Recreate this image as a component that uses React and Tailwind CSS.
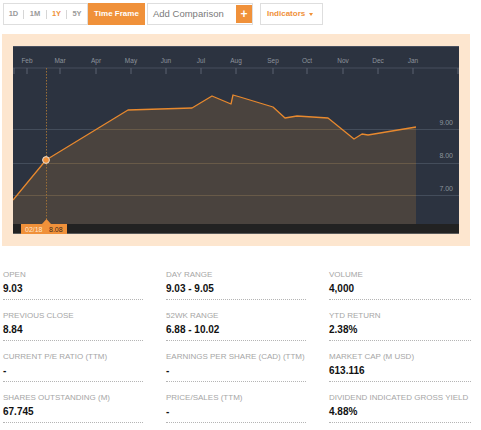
import React from 'react';

const months = [
  ['Feb', 14], ['Mar', 47], ['Apr', 83], ['May', 118], ['Jun', 153], ['Jul', 188],
  ['Aug', 223], ['Sep', 260], ['Oct', 294], ['Nov', 330], ['Dec', 365], ['Jan', 400],
];
const ticks = [1, 14, 47, 83, 118, 153, 188, 223, 260, 294, 330, 365, 400, 445];

const pts = [
  [0, 154], [33, 114], [115, 64], [179, 62], [199, 50], [218, 58], [220, 49], [227, 51],
  [260, 61], [272, 72], [284, 70], [315, 72], [341, 93], [349, 88], [355, 89], [403, 81],
];
const line = pts.map((p) => p.join(',')).join(' ');
const area = `0,178 ${line} 403,178`;

const grid = [83, 117, 149];

const stats = [
  ['OPEN', '9.03'], ['DAY RANGE', '9.03 - 9.05'], ['VOLUME', '4,000'],
  ['PREVIOUS CLOSE', '8.84'], ['52WK RANGE', '6.88 - 10.02'], ['YTD RETURN', '2.38%'],
  ['CURRENT P/E RATIO (TTM)', '-'], ['EARNINGS PER SHARE (CAD) (TTM)', '-'], ['MARKET CAP (M USD)', '613.116'],
  ['SHARES OUTSTANDING (M)', '67.745'], ['PRICE/SALES (TTM)', '-'], ['DIVIDEND INDICATED GROSS YIELD', '4.88%'],
];

const Chart = () => (
  <svg width="446" height="188" viewBox="0 0 446 188" className="block" fontFamily="Liberation Sans, sans-serif">
    <defs>
      <clipPath id="fillClip">
        <polygon points={area} />
      </clipPath>
    </defs>
    <rect x="0" y="0" width="446" height="188" fill="#2c3340" />
    <rect x="0" y="0" width="446" height="1" fill="#4a5160" />

    {/* months axis */}
    {months.map(([m, x]) => (
      <text key={m} x={x} y="16.5" fontSize="6.5" fill="#8d939d" textAnchor="middle">{m}</text>
    ))}
    <rect x="0" y="21.5" width="446" height="1" fill="#474f5c" />
    {ticks.map((x) => (
      <rect key={x} x={x - 0.5} y="22" width="1" height="6" fill="#5b6270" />
    ))}

    {/* grid in dark area */}
    {grid.map((y) => (
      <rect key={y} x="0" y={y} width="446" height="1" fill="#444d5b" />
    ))}

    <polygon points={area} fill="#4a433e" />
    <g clipPath="url(#fillClip)">
      {grid.map((y) => (
        <rect key={y} x="0" y={y} width="446" height="1" fill="#685a48" />
      ))}
    </g>

    <text x="440" y="78.5" fontSize="7" fill="#8d939d" textAnchor="end">9.00</text>
    <text x="440" y="111.5" fontSize="7" fill="#8d939d" textAnchor="end">8.00</text>
    <text x="440" y="144.5" fontSize="7" fill="#8d939d" textAnchor="end">7.00</text>

    <polyline points={line} fill="none" stroke="#e8892e" strokeWidth="1.3" strokeLinejoin="round" />

    {/* crosshair */}
    <line x1="33.5" y1="22" x2="33.5" y2="178" stroke="#9a6e36" strokeWidth="1" strokeDasharray="1.5 1.5" />

    {/* bottom bar */}
    <rect x="0" y="178" width="446" height="10" fill="#222222" />
    <rect x="0" y="187" width="446" height="1" fill="#5a5a5a" />

    {/* tooltip */}
    <polygon points="29,178 33.5,173 38,178" fill="#f0913a" />
    <rect x="8" y="178" width="46" height="10" fill="#f0913a" />
    <text x="12" y="185.5" fontSize="7" fill="#fde6cf">02/18</text>
    <text x="36" y="185.5" fontSize="7" fill="#3a2a1a">8.08</text>

    <circle cx="33" cy="114" r="3.4" fill="#f0913a" stroke="#e6e0d8" strokeWidth="1" />
  </svg>
);

const Seg = ({ label, w, active }) => (
  <div
    className={`${w} h-full flex items-center justify-center text-[7.5px] font-bold ${
      active ? 'text-[#f0913a]' : 'text-[#9a9a9a]'
    }`}
  >
    {label}
  </div>
);

const Divider = () => <div className="w-px h-[9px] bg-[#d6d6d6]" />;

const App = () => {
  return (
    <div className="w-[481px] h-[430px] bg-white overflow-hidden font-['Liberation_Sans',sans-serif]">
      {/* toolbar */}
      <div className="flex items-start pt-[3px] pl-[3px]">
        <div className="flex items-center h-[22px] border border-[#dedede] bg-white">
          <Seg label="1D" w="w-[19px]" />
          <Divider />
          <Seg label="1M" w="w-[22px]" />
          <Divider />
          <Seg label="1Y" w="w-[19px]" active />
          <Divider />
          <Seg label="5Y" w="w-[20px]" />
        </div>
        <button className="h-[22px] w-[57px] bg-[#f0913a] text-white text-[8px] font-bold flex items-center justify-center">
          Time Frame
        </button>
        <div className="ml-[2px] flex h-[22px] w-[106px] border border-[#dedede] bg-white">
          <div className="flex-1 flex items-center pl-[5px] text-[9.5px] text-[#7a7a7a]">Add Comparison</div>
          <div className="w-[16px] my-[1px] bg-[#f0913a] flex items-center justify-center text-white text-[12px] font-bold leading-none">
            +
          </div>
        </div>
        <button className="ml-[7px] h-[22px] w-[63px] border border-[#dedede] bg-white flex items-center pl-[6px] text-[8px] font-bold text-[#f0913a]">
          Indicators
          <span className="ml-[4px] w-0 h-0 border-l-[2.5px] border-r-[2.5px] border-t-[3px] border-l-transparent border-r-transparent border-t-[#f0913a]" />
        </button>
      </div>

      {/* chart panel */}
      <div className="mt-[9px] ml-[2px] w-[468px] h-[212px] bg-[#fde6cf] pt-[12px] pl-[11px]">
        <Chart />
      </div>

      {/* stats */}
      <div className="mt-[13px] pl-[3px] grid grid-cols-[140px_140px_142px] gap-x-[23px]">
        {stats.map(([label, value]) => (
          <div key={label} className="pt-[11px] pb-[4px] border-b border-dotted border-[#b5b5b5]">
            <div className="text-[8px] leading-[10px] text-[#a6a6a6] whitespace-nowrap">{label}</div>
            <div className="mt-[3px] text-[10px] leading-[12px] font-bold text-[#111]">{value}</div>
          </div>
        ))}
      </div>
    </div>
  );
};

export default App;
